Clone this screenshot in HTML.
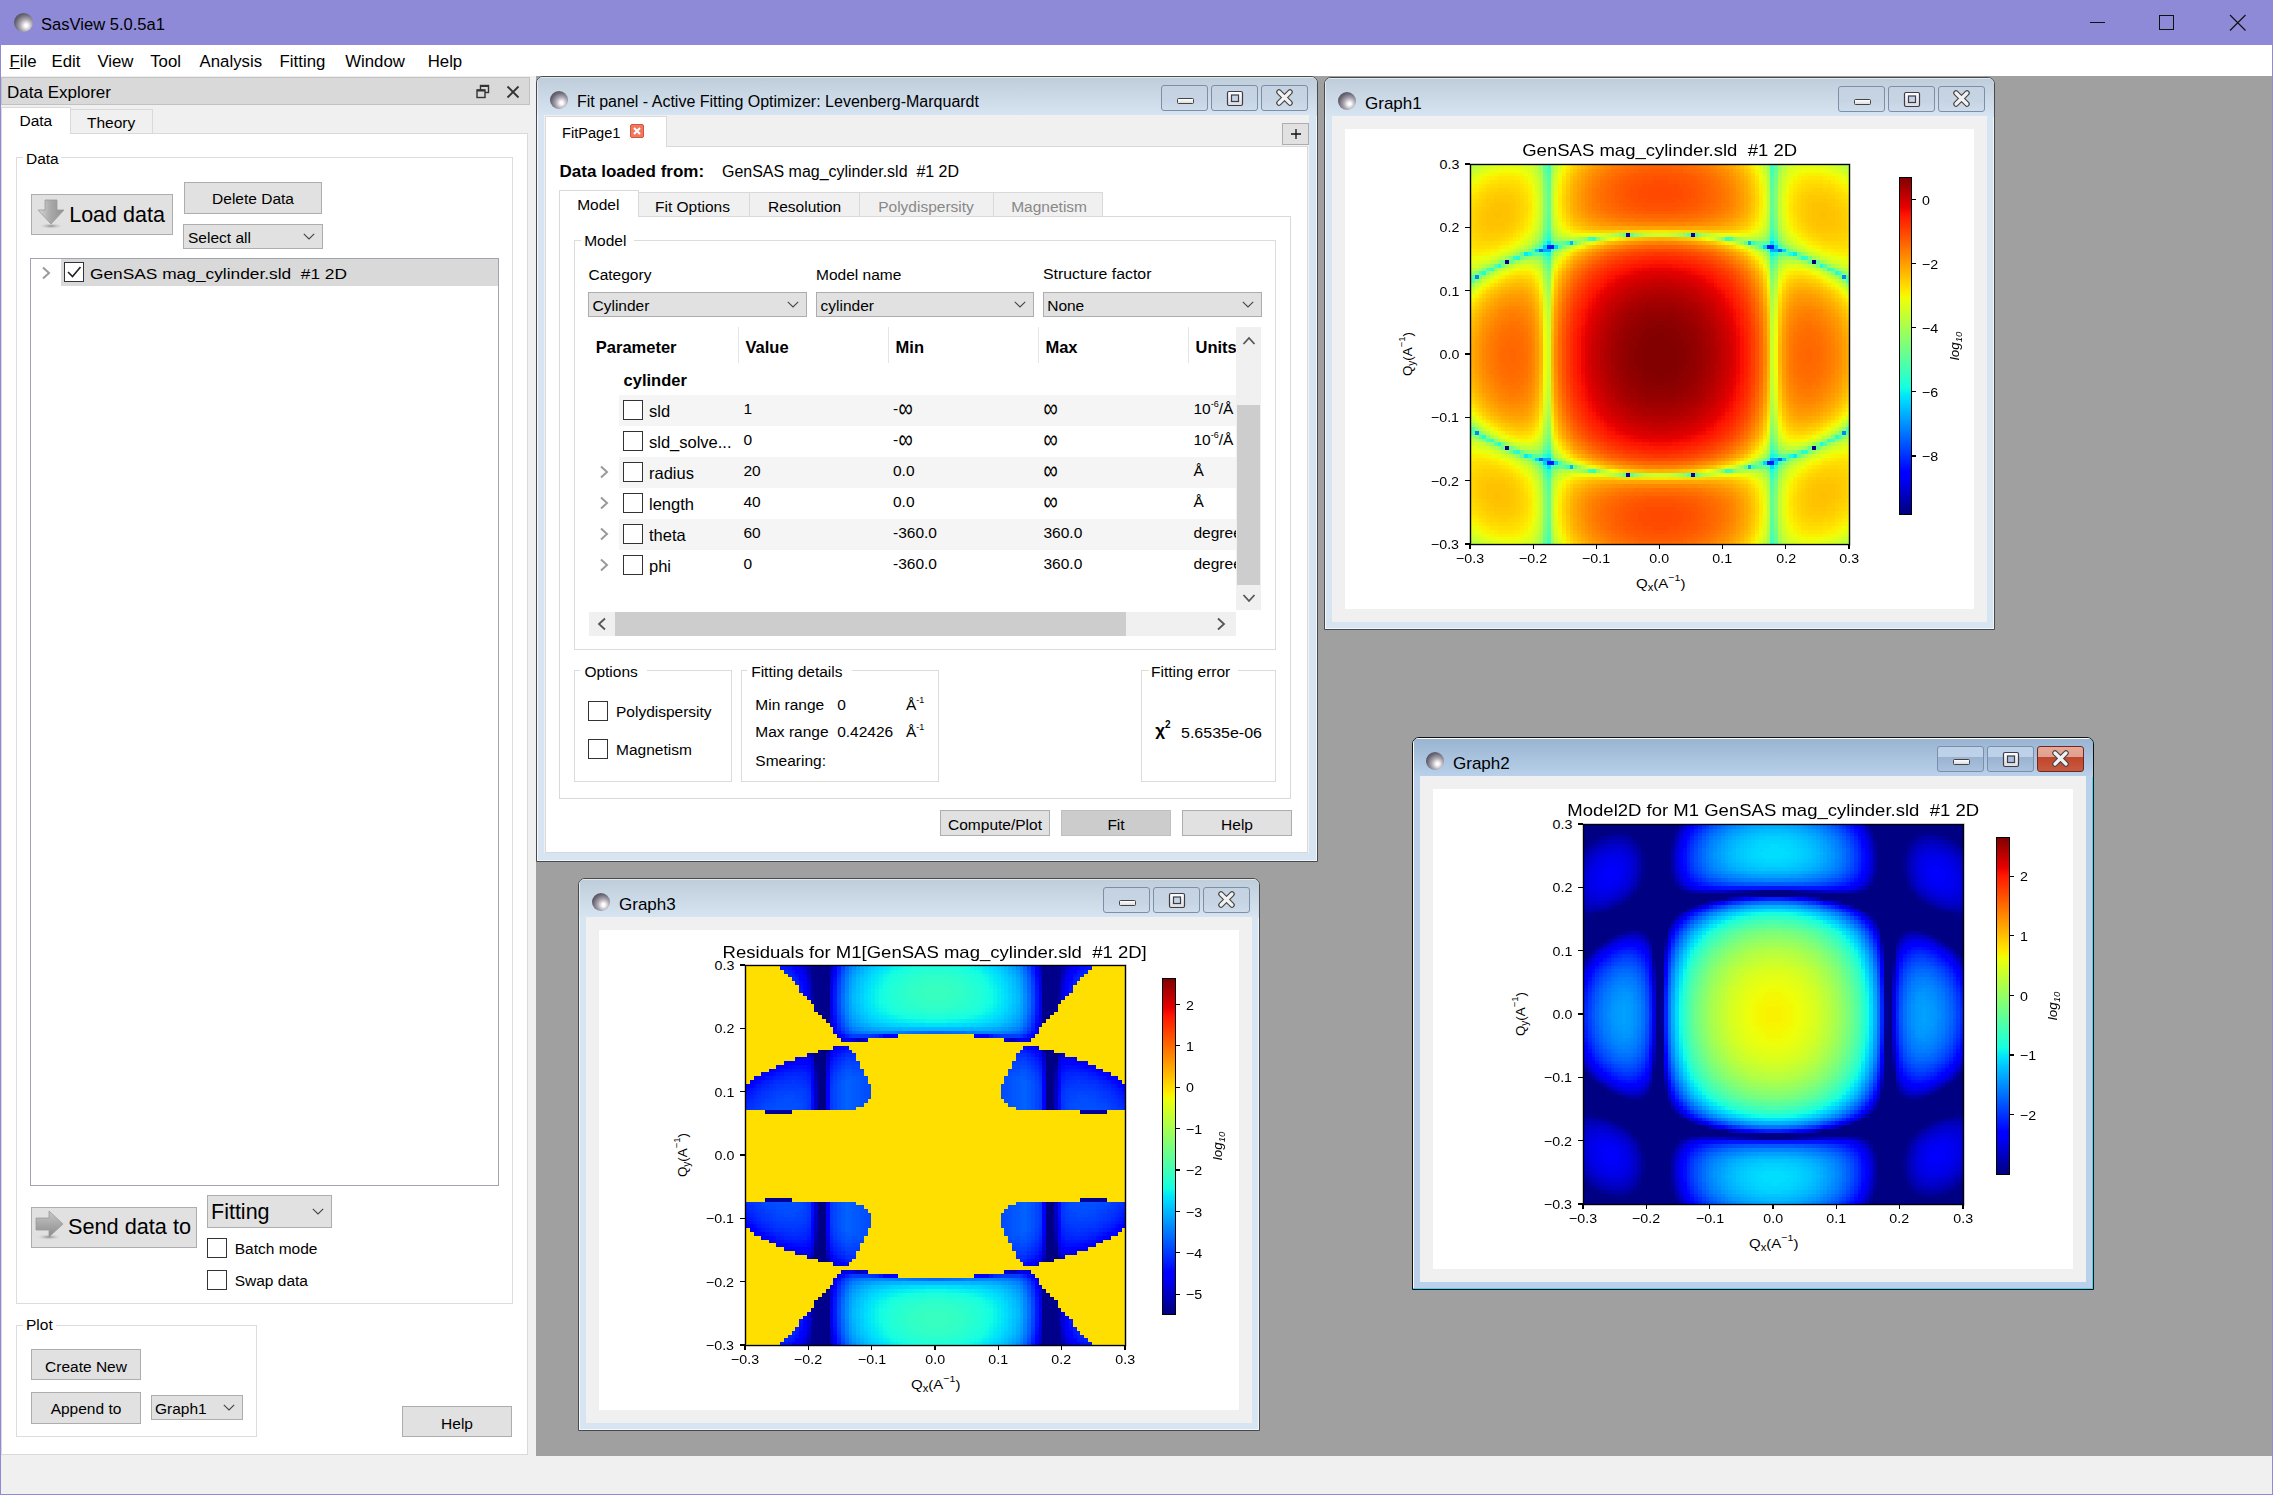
<!DOCTYPE html><html><head><meta charset="utf-8"><style>
*{margin:0;padding:0}
html,body{width:2273px;height:1495px;overflow:hidden;background:#F0F0F0;font-family:"Liberation Sans",sans-serif}
.t{position:absolute;width:0;display:flex;white-space:nowrap;line-height:1}
.t span{display:inline-block;line-height:1;white-space:nowrap}
.r{position:absolute}
canvas{position:absolute;image-rendering:pixelated}
</style></head><body>
<div class="r" style="left:0px;top:0px;width:2273px;height:45px;background:#8E8AD8;"></div>
<div class="r" style="left:14px;top:13px;width:19px;height:19px;border-radius:50%;background:radial-gradient(circle at 64% 66%, #fff 0%, #fdfbfc 9%, #aaa5b0 36%, #676472 64%, #3a3845 100%)"></div>
<div class="t" style="left:41.00px;top:15.84px;justify-content:flex-start;"><span style="font-size:17.2px;color:#000;transform:scaleX(0.9627505069511684);transform-origin:left top;">SasView 5.0.5a1</span></div>
<div class="r" style="left:2090px;top:22px;width:15px;height:1px;background:#111;"></div>
<div class="r" style="left:2159px;top:15px;width:15px;height:15px;background:transparent;box-sizing:border-box;border:1px solid #111;"></div>
<svg width="18" height="18" style="position:absolute;left:2229px;top:14px"><path d="M1 1 L16.5 16.5 M16.5 1 L1 16.5" stroke="#111" stroke-width="1.2"/></svg>
<div class="r" style="left:0px;top:45px;width:1px;height:1450px;background:#8E8AD8;"></div>
<div class="r" style="left:2272px;top:45px;width:1px;height:1450px;background:#8E8AD8;"></div>
<div class="r" style="left:0px;top:1494px;width:2273px;height:1px;background:#8E8AD8;"></div>
<div class="r" style="left:1px;top:45px;width:2271px;height:31px;background:#fff;"></div>
<div class="t" style="left:9.50px;top:54.18px;justify-content:flex-start;"><span style="font-size:16.8px;color:#000;"><u>F</u>ile</span></div>
<div class="t" style="left:51.60px;top:54.18px;justify-content:flex-start;"><span style="font-size:16.8px;color:#000;">Edit</span></div>
<div class="t" style="left:97.40px;top:54.18px;justify-content:flex-start;"><span style="font-size:16.8px;color:#000;">View</span></div>
<div class="t" style="left:150.20px;top:54.18px;justify-content:flex-start;"><span style="font-size:16.8px;color:#000;">Tool</span></div>
<div class="t" style="left:199.60px;top:54.18px;justify-content:flex-start;"><span style="font-size:16.8px;color:#000;">Analysis</span></div>
<div class="t" style="left:279.60px;top:54.18px;justify-content:flex-start;"><span style="font-size:16.8px;color:#000;">Fitting</span></div>
<div class="t" style="left:345.20px;top:54.18px;justify-content:flex-start;"><span style="font-size:16.8px;color:#000;">Window</span></div>
<div class="t" style="left:427.70px;top:54.18px;justify-content:flex-start;"><span style="font-size:16.8px;color:#000;">Help</span></div>
<div class="r" style="left:536px;top:76px;width:1736px;height:1380px;background:#A0A0A0;"></div>
<div class="r" style="left:1px;top:1456px;width:2271px;height:38px;background:#F0F0F0;"></div>
<div class="r" style="left:1px;top:77px;width:529px;height:28px;background:#D9D9D9;box-sizing:border-box;border:1px solid #C2C2C2;"></div>
<div class="t" style="left:7.00px;top:84.31px;justify-content:flex-start;"><span style="font-size:17px;color:#000;">Data Explorer</span></div>
<svg width="14" height="15" style="position:absolute;left:476px;top:84px"><rect x="4.5" y="1.5" width="8" height="7" fill="#D9D9D9" stroke="#333" stroke-width="1.4"/><rect x="4.5" y="1.2" width="8" height="1.8" fill="#333"/><rect x="1" y="6" width="8" height="7.5" fill="#D9D9D9" stroke="#333" stroke-width="1.4"/><rect x="1" y="5.5" width="8" height="2" fill="#333"/></svg>
<svg width="14" height="14" style="position:absolute;left:506px;top:85px"><path d="M1.5 1.5 L12.5 12.5 M12.5 1.5 L1.5 12.5" stroke="#333" stroke-width="1.8"/></svg>
<div class="r" style="left:1px;top:133px;width:527px;height:1322px;background:#fff;box-sizing:border-box;border:1px solid #D9D9D9;"></div>
<div class="r" style="left:70px;top:109px;width:83px;height:25px;background:#F0F0F0;box-sizing:border-box;border:1px solid #D9D9D9;"></div>
<div class="r" style="left:1px;top:107px;width:70px;height:27px;background:#fff;box-sizing:border-box;border:1px solid #D9D9D9;border-bottom:none"></div>
<div class="t" style="left:19.50px;top:113.28px;justify-content:flex-start;"><span style="font-size:15.5px;color:#000;">Data</span></div>
<div class="t" style="left:87.00px;top:114.68px;justify-content:flex-start;"><span style="font-size:15.5px;color:#000;">Theory</span></div>
<div class="r" style="left:16px;top:157px;width:497px;height:1147px;background:transparent;box-sizing:border-box;border:1px solid #DCDCDC;"></div>
<div class="r" style="left:22.5px;top:155px;width:38.8px;height:5px;background:#fff"></div>
<div class="t" style="left:26.00px;top:150.88px;justify-content:flex-start;"><span style="font-size:15.5px;color:#000;">Data</span></div>
<div class="r" style="left:31px;top:194px;width:142px;height:41px;background:#E1E1E1;box-sizing:border-box;border:1px solid #ADADAD;"></div>
<svg width="30" height="30" style="position:absolute;left:36px;top:199px"><defs><linearGradient id="ga" x1="0" x2="1"><stop offset="0" stop-color="#d8d8d8"/><stop offset="0.5" stop-color="#a8a8a8"/><stop offset="1" stop-color="#909090"/></linearGradient><radialGradient id="gs"><stop offset="0" stop-color="#888"/><stop offset="1" stop-color="#e1e1e1" stop-opacity="0"/></radialGradient></defs><ellipse cx="15" cy="27" rx="13" ry="3" fill="url(#gs)"/><path d="M9 1 H21 V11 H28 L15 25 L2 11 H9 Z" fill="url(#ga)" stroke="#9a9a9a" stroke-width="0.8"/></svg>
<div class="t" style="left:69.20px;top:204.60px;justify-content:flex-start;"><span style="font-size:21.5px;color:#000;">Load data</span></div>
<div class="r" style="left:184px;top:182px;width:138px;height:32px;background:#E1E1E1;box-sizing:border-box;border:1px solid #ADADAD;"></div>
<div class="t" style="left:253.00px;top:191.38px;justify-content:center;"><span style="font-size:15.5px;color:#000;">Delete Data</span></div>
<div class="r" style="left:183px;top:224px;width:140px;height:25px;background:#E1E1E1;box-sizing:border-box;border:1px solid #ADADAD;"></div>
<div class="t" style="left:188.00px;top:229.88px;justify-content:flex-start;"><span style="font-size:15.5px;color:#000;">Select all</span></div>
<svg width="12" height="7" viewBox="0 0 12 7" style="position:absolute;left:302.5px;top:233.0px"><path d="M0.8 0.8 L6 6 L11.2 0.8" fill="none" stroke="#444" stroke-width="1.1"/></svg>
<div class="r" style="left:30px;top:258px;width:469px;height:928px;background:#fff;box-sizing:border-box;border:1px solid #A0A4AC;"></div>
<div class="r" style="left:61px;top:259px;width:437px;height:27px;background:#D9D9D9;"></div>
<svg width="10" height="14" style="position:absolute;left:41px;top:266px"><path d="M2 1.5 L8 7 L2 12.5" fill="none" stroke="#9a9a9a" stroke-width="2"/></svg>
<div class="r" style="left:64px;top:262px;width:20px;height:20px;background:#fff;box-sizing:border-box;border:1px solid #333;"></div>
<svg width="20" height="20" style="position:absolute;left:64px;top:262px"><path d="M4 10 L8.5 14.5 L16.5 5" fill="none" stroke="#222" stroke-width="1.6"/></svg>
<div class="t" style="left:90.30px;top:265.88px;justify-content:flex-start;"><span style="font-size:15.5px;color:#000;transform:scaleX(1.117205579635099);transform-origin:left top;">GenSAS mag_cylinder.sld&nbsp;&nbsp;#1 2D</span></div>
<div class="r" style="left:31px;top:1207px;width:166px;height:41px;background:#E1E1E1;box-sizing:border-box;border:1px solid #ADADAD;"></div>
<svg width="30" height="30" style="position:absolute;left:35px;top:1210px"><defs><linearGradient id="gb" x1="0" y1="0" x2="0" y2="1"><stop offset="0" stop-color="#c8c8c8"/><stop offset="1" stop-color="#8a8a8a"/></linearGradient></defs><ellipse cx="14" cy="27" rx="13" ry="3" fill="url(#gs)"/><path d="M1 8 H14 V1 L28 14 L14 27 V20 H1 Z" fill="url(#gb)" stroke="#9a9a9a" stroke-width="0.8"/></svg>
<div class="t" style="left:68.20px;top:1216.80px;justify-content:flex-start;"><span style="font-size:21.5px;color:#000;transform:scaleX(1.0087730935949422);transform-origin:left top;">Send data to</span></div>
<div class="r" style="left:207px;top:1195px;width:125px;height:33px;background:#E1E1E1;box-sizing:border-box;border:1px solid #ADADAD;"></div>
<div class="t" style="left:211.00px;top:1201.80px;justify-content:flex-start;"><span style="font-size:21.5px;color:#000;">Fitting</span></div>
<svg width="12" height="7" viewBox="0 0 12 7" style="position:absolute;left:311.5px;top:1208.0px"><path d="M0.8 0.8 L6 6 L11.2 0.8" fill="none" stroke="#444" stroke-width="1.1"/></svg>
<div class="r" style="left:207px;top:1238px;width:20px;height:20px;background:#fff;box-sizing:border-box;border:1px solid #333;"></div>
<div class="t" style="left:234.70px;top:1241.38px;justify-content:flex-start;"><span style="font-size:15.5px;color:#000;">Batch mode</span></div>
<div class="r" style="left:207px;top:1270px;width:20px;height:20px;background:#fff;box-sizing:border-box;border:1px solid #333;"></div>
<div class="t" style="left:234.70px;top:1273.48px;justify-content:flex-start;"><span style="font-size:15.5px;color:#000;">Swap data</span></div>
<div class="r" style="left:16px;top:1325px;width:241px;height:112px;background:transparent;box-sizing:border-box;border:1px solid #DCDCDC;"></div>
<div class="r" style="left:22.5px;top:1323px;width:33.3px;height:5px;background:#fff"></div>
<div class="t" style="left:26.00px;top:1317.48px;justify-content:flex-start;"><span style="font-size:15.5px;color:#000;">Plot</span></div>
<div class="r" style="left:31px;top:1349px;width:110px;height:31px;background:#E1E1E1;box-sizing:border-box;border:1px solid #ADADAD;"></div>
<div class="t" style="left:86.00px;top:1358.88px;justify-content:center;"><span style="font-size:15.5px;color:#000;">Create New</span></div>
<div class="r" style="left:31px;top:1392px;width:110px;height:32px;background:#E1E1E1;box-sizing:border-box;border:1px solid #ADADAD;"></div>
<div class="t" style="left:86.00px;top:1401.08px;justify-content:center;"><span style="font-size:15.5px;color:#000;">Append to</span></div>
<div class="r" style="left:151px;top:1395px;width:92px;height:25px;background:#E1E1E1;box-sizing:border-box;border:1px solid #ADADAD;"></div>
<div class="t" style="left:155.00px;top:1400.58px;justify-content:flex-start;"><span style="font-size:15.5px;color:#000;">Graph1</span></div>
<svg width="12" height="7" viewBox="0 0 12 7" style="position:absolute;left:222.5px;top:1404.0px"><path d="M0.8 0.8 L6 6 L11.2 0.8" fill="none" stroke="#444" stroke-width="1.1"/></svg>
<div class="r" style="left:402px;top:1406px;width:110px;height:31px;background:#E1E1E1;box-sizing:border-box;border:1px solid #ADADAD;"></div>
<div class="t" style="left:457.00px;top:1416.08px;justify-content:center;"><span style="font-size:15.5px;color:#000;">Help</span></div>
<div class="r" style="left:536px;top:76px;width:782px;height:786px;box-sizing:border-box;border:1px solid #4a4a4a;border-radius:7px 7px 0 0;background:#D7E4F2;overflow:hidden;box-shadow:inset -1px -1px 0 #F2F7FE, inset 1px 1px 0 rgba(255,255,255,0.55)"><div style="position:absolute;left:0;top:0;right:0;height:39px;background:linear-gradient(#BFCDDB,#D7E4F2)"></div><div style="position:absolute;left:0;top:0;right:1px;height:1px;background:rgba(255,255,255,0.55)"></div><div style="position:absolute;left:0;top:0;width:1px;bottom:1px;background:rgba(255,255,255,0.55)"></div></div>
<div class="r" style="left:550px;top:91px;width:18px;height:18px;border-radius:50%;background:radial-gradient(circle at 64% 66%, #fff 0%, #fdfbfc 9%, #aaa5b0 36%, #676472 64%, #3a3845 100%)"></div>
<div class="t" style="left:577.00px;top:94.46px;justify-content:flex-start;"><span style="font-size:16px;color:#000;">Fit panel - Active Fitting Optimizer: Levenberg-Marquardt</span></div>
<div class="r" style="left:1161px;top:85px;width:47px;height:26px;box-sizing:border-box;border:1px solid #7C8EA8;border-radius:3px;background:linear-gradient(#C4D2E2 0%,#C6D4E4 60%,#CFDCEA 100%)"></div>
<div class="r" style="left:1176.5px;top:97.5px;width:17px;height:6px;box-sizing:border-box;border:1px solid #444;border-radius:1.5px;background:linear-gradient(#fff,#ddd)"></div>
<div class="r" style="left:1211px;top:85px;width:47px;height:26px;box-sizing:border-box;border:1px solid #7C8EA8;border-radius:3px;background:linear-gradient(#C4D2E2 0%,#C6D4E4 60%,#CFDCEA 100%)"></div>
<svg width="18" height="17" style="position:absolute;left:1226px;top:90px"><defs><linearGradient id="mx1211" x1="0" y1="0" x2="0" y2="1"><stop offset="0" stop-color="#fff"/><stop offset="1" stop-color="#dcdcdc"/></linearGradient></defs><rect x="1.5" y="1.5" width="15" height="14" rx="1.5" fill="url(#mx1211)" stroke="#3c3c4c" stroke-width="1.2"/><rect x="5.5" y="5" width="7" height="6.5" fill="#C5D3E3" stroke="#3c3c4c" stroke-width="1.2"/></svg>
<div class="r" style="left:1261px;top:85px;width:47px;height:26px;box-sizing:border-box;border:1px solid #7C8EA8;border-radius:3px;background:linear-gradient(#C4D2E2 0%,#C6D4E4 60%,#CFDCEA 100%)"></div>
<svg width="47" height="26" style="position:absolute;left:1261px;top:85px"><path d="M18 7 L29 18 M29 7 L18 18" stroke="#444" stroke-width="5.5" stroke-linecap="round"/><path d="M18 7 L29 18 M29 7 L18 18" stroke="#f2f2f2" stroke-width="3.2" stroke-linecap="round"/></svg>
<div class="r" style="left:544px;top:115px;width:765px;height:738px;background:#F0F0F0;"></div>
<div class="r" style="left:545px;top:146px;width:763px;height:707px;background:#fff;box-sizing:border-box;border:1px solid #D9D9D9;"></div>
<div class="r" style="left:545px;top:116px;width:122px;height:31px;background:#fff;box-sizing:border-box;border:1px solid #D9D9D9;border-bottom:none"></div>
<div class="t" style="left:562.20px;top:124.68px;justify-content:flex-start;"><span style="font-size:15.5px;color:#000;transform:scaleX(0.9429936849291687);transform-origin:left top;">FitPage1</span></div>
<svg width="15" height="15" style="position:absolute;left:630px;top:123.5px"><rect x="0.5" y="0.5" width="13" height="13" rx="1.5" fill="#F07860" stroke="#D05838"/><path d="M4 4 L10 10 M10 4 L4 10" stroke="#fff" stroke-width="2"/></svg>
<div class="r" style="left:1282px;top:123px;width:27px;height:22px;background:#E1E1E1;box-sizing:border-box;border:1px solid #ADADAD;"></div>
<svg width="12" height="12" style="position:absolute;left:1289.5px;top:128px"><path d="M6 1 V11 M1 6 H11" stroke="#111" stroke-width="1.3"/></svg>
<div class="t" style="left:559.60px;top:163.01px;justify-content:flex-start;"><span style="font-size:17px;color:#000;font-weight:bold;">Data loaded from:</span></div>
<div class="t" style="left:721.50px;top:163.86px;justify-content:flex-start;"><span style="font-size:16px;color:#000;transform:scaleX(0.9980677764565993);transform-origin:left top;">GenSAS mag_cylinder.sld&nbsp;&nbsp;#1 2D</span></div>
<div class="r" style="left:559px;top:216px;width:732px;height:583px;background:#fff;box-sizing:border-box;border:1px solid #D9D9D9;"></div>
<div class="r" style="left:638px;top:192px;width:112px;height:25px;background:#F0F0F0;box-sizing:border-box;border:1px solid #D9D9D9;"></div>
<div class="t" style="left:655.00px;top:198.58px;justify-content:flex-start;"><span style="font-size:15.5px;color:#000;">Fit Options</span></div>
<div class="r" style="left:749px;top:192px;width:111px;height:25px;background:#F0F0F0;box-sizing:border-box;border:1px solid #D9D9D9;"></div>
<div class="t" style="left:768.00px;top:198.58px;justify-content:flex-start;"><span style="font-size:15.5px;color:#000;">Resolution</span></div>
<div class="r" style="left:859px;top:192px;width:135px;height:25px;background:#F0F0F0;box-sizing:border-box;border:1px solid #D9D9D9;"></div>
<div class="t" style="left:878.20px;top:198.58px;justify-content:flex-start;"><span style="font-size:15.5px;color:#888;">Polydispersity</span></div>
<div class="r" style="left:993px;top:192px;width:110px;height:25px;background:#F0F0F0;box-sizing:border-box;border:1px solid #D9D9D9;"></div>
<div class="t" style="left:1011.20px;top:198.58px;justify-content:flex-start;"><span style="font-size:15.5px;color:#888;">Magnetism</span></div>
<div class="r" style="left:559px;top:190px;width:80px;height:27px;background:#fff;box-sizing:border-box;border:1px solid #D9D9D9;border-bottom:none"></div>
<div class="t" style="left:577.20px;top:196.88px;justify-content:flex-start;"><span style="font-size:15.5px;color:#000;">Model</span></div>
<div class="r" style="left:574px;top:240px;width:702px;height:410px;background:transparent;box-sizing:border-box;border:1px solid #DCDCDC;"></div>
<div class="r" style="left:581px;top:238px;width:53px;height:5px;background:#fff"></div>
<div class="t" style="left:584.20px;top:233.48px;justify-content:flex-start;"><span style="font-size:15.5px;color:#000;">Model</span></div>
<div class="t" style="left:588.50px;top:266.78px;justify-content:flex-start;"><span style="font-size:15.5px;color:#000;">Category</span></div>
<div class="t" style="left:816.00px;top:266.78px;justify-content:flex-start;"><span style="font-size:15.5px;color:#000;">Model name</span></div>
<div class="t" style="left:1043.20px;top:266.48px;justify-content:flex-start;"><span style="font-size:15.5px;color:#000;transform:scaleX(1.0231525179057244);transform-origin:left top;">Structure factor</span></div>
<div class="r" style="left:588px;top:292px;width:219px;height:25px;background:#E1E1E1;box-sizing:border-box;border:1px solid #ADADAD;"></div>
<div class="t" style="left:592.50px;top:297.68px;justify-content:flex-start;"><span style="font-size:15.5px;color:#000;">Cylinder</span></div>
<svg width="12" height="7" viewBox="0 0 12 7" style="position:absolute;left:786.5px;top:301.0px"><path d="M0.8 0.8 L6 6 L11.2 0.8" fill="none" stroke="#444" stroke-width="1.1"/></svg>
<div class="r" style="left:816px;top:292px;width:218px;height:25px;background:#E1E1E1;box-sizing:border-box;border:1px solid #ADADAD;"></div>
<div class="t" style="left:820.50px;top:297.68px;justify-content:flex-start;"><span style="font-size:15.5px;color:#000;">cylinder</span></div>
<svg width="12" height="7" viewBox="0 0 12 7" style="position:absolute;left:1013.5px;top:301.0px"><path d="M0.8 0.8 L6 6 L11.2 0.8" fill="none" stroke="#444" stroke-width="1.1"/></svg>
<div class="r" style="left:1043px;top:292px;width:219px;height:25px;background:#E1E1E1;box-sizing:border-box;border:1px solid #ADADAD;"></div>
<div class="t" style="left:1047.20px;top:297.68px;justify-content:flex-start;"><span style="font-size:15.5px;color:#000;">None</span></div>
<svg width="12" height="7" viewBox="0 0 12 7" style="position:absolute;left:1241.5px;top:301.0px"><path d="M0.8 0.8 L6 6 L11.2 0.8" fill="none" stroke="#444" stroke-width="1.1"/></svg>
<div class="r" style="left:738px;top:327px;width:1px;height:36px;background:#E5E5E5;"></div>
<div class="r" style="left:888px;top:327px;width:1px;height:36px;background:#E5E5E5;"></div>
<div class="r" style="left:1038px;top:327px;width:1px;height:36px;background:#E5E5E5;"></div>
<div class="r" style="left:1188px;top:327px;width:1px;height:36px;background:#E5E5E5;"></div>
<div class="t" style="left:595.80px;top:339.13px;justify-content:flex-start;"><span style="font-size:16.5px;color:#000;font-weight:bold;">Parameter</span></div>
<div class="t" style="left:745.50px;top:339.13px;justify-content:flex-start;"><span style="font-size:16.5px;color:#000;font-weight:bold;">Value</span></div>
<div class="t" style="left:895.60px;top:339.13px;justify-content:flex-start;"><span style="font-size:16.5px;color:#000;font-weight:bold;">Min</span></div>
<div class="t" style="left:1045.40px;top:339.13px;justify-content:flex-start;"><span style="font-size:16.5px;color:#000;font-weight:bold;">Max</span></div>
<div class="r" style="left:1188px;top:327px;width:48px;height:40px;overflow:hidden">
<div class="t" style="left:7.50px;top:12.13px;justify-content:flex-start;"><span style="font-size:16.5px;color:#000;font-weight:bold;">Units</span></div>
</div>
<div class="t" style="left:623.60px;top:372.23px;justify-content:flex-start;"><span style="font-size:16.5px;color:#000;font-weight:bold;">cylinder</span></div>
<div class="r" style="left:619px;top:395px;width:617px;height:31px;background:#F5F5F5;"></div>
<div class="r" style="left:623px;top:400px;width:20px;height:20px;background:#fff;box-sizing:border-box;border:1px solid #333;"></div>
<div class="t" style="left:649.00px;top:403.03px;justify-content:flex-start;"><span style="font-size:16.5px;color:#000;">sld</span></div>
<div class="t" style="left:743.50px;top:400.88px;justify-content:flex-start;"><span style="font-size:15.5px;color:#000;">1</span></div>
<div class="t" style="left:893.00px;top:400.88px;justify-content:flex-start;"><span style="font-size:15.5px;color:#000;">-</span></div>
<div class="t" style="left:898.50px;top:399.07px;justify-content:flex-start;transform:scaleY(1.32);transform-origin:0 14px"><span style="font-size:20px;color:#000;">∞</span></div>
<div class="t" style="left:1043.50px;top:399.07px;justify-content:flex-start;transform:scaleY(1.32);transform-origin:0 14px"><span style="font-size:20px;color:#000;">∞</span></div>
<div class="r" style="left:1188px;top:395px;width:48px;height:31px;overflow:hidden">
<div class="t" style="left:5.50px;top:5.88px;justify-content:flex-start;"><span style="font-size:15.5px;color:#000;">10<span style="font-size:9px;position:relative;top:-7.0px">-6</span>/Å</span></div>
</div>
<div class="r" style="left:623px;top:431px;width:20px;height:20px;background:#fff;box-sizing:border-box;border:1px solid #333;"></div>
<div class="t" style="left:649.00px;top:434.03px;justify-content:flex-start;"><span style="font-size:16.5px;color:#000;">sld_solve...</span></div>
<div class="t" style="left:743.50px;top:431.88px;justify-content:flex-start;"><span style="font-size:15.5px;color:#000;">0</span></div>
<div class="t" style="left:893.00px;top:431.88px;justify-content:flex-start;"><span style="font-size:15.5px;color:#000;">-</span></div>
<div class="t" style="left:898.50px;top:430.07px;justify-content:flex-start;transform:scaleY(1.32);transform-origin:0 14px"><span style="font-size:20px;color:#000;">∞</span></div>
<div class="t" style="left:1043.50px;top:430.07px;justify-content:flex-start;transform:scaleY(1.32);transform-origin:0 14px"><span style="font-size:20px;color:#000;">∞</span></div>
<div class="r" style="left:1188px;top:426px;width:48px;height:31px;overflow:hidden">
<div class="t" style="left:5.50px;top:5.88px;justify-content:flex-start;"><span style="font-size:15.5px;color:#000;">10<span style="font-size:9px;position:relative;top:-7.0px">-6</span>/Å</span></div>
</div>
<div class="r" style="left:619px;top:457px;width:617px;height:31px;background:#F5F5F5;"></div>
<svg width="10" height="14" style="position:absolute;left:599px;top:465px"><path d="M2 1.5 L8 7 L2 12.5" fill="none" stroke="#9a9a9a" stroke-width="2"/></svg>
<div class="r" style="left:623px;top:462px;width:20px;height:20px;background:#fff;box-sizing:border-box;border:1px solid #333;"></div>
<div class="t" style="left:649.00px;top:465.03px;justify-content:flex-start;"><span style="font-size:16.5px;color:#000;">radius</span></div>
<div class="t" style="left:743.50px;top:462.88px;justify-content:flex-start;"><span style="font-size:15.5px;color:#000;">20</span></div>
<div class="t" style="left:893.00px;top:462.88px;justify-content:flex-start;"><span style="font-size:15.5px;color:#000;">0.0</span></div>
<div class="t" style="left:1043.50px;top:461.07px;justify-content:flex-start;transform:scaleY(1.32);transform-origin:0 14px"><span style="font-size:20px;color:#000;">∞</span></div>
<div class="r" style="left:1188px;top:457px;width:48px;height:31px;overflow:hidden">
<div class="t" style="left:5.50px;top:5.88px;justify-content:flex-start;"><span style="font-size:15.5px;color:#000;">Å</span></div>
</div>
<svg width="10" height="14" style="position:absolute;left:599px;top:496px"><path d="M2 1.5 L8 7 L2 12.5" fill="none" stroke="#9a9a9a" stroke-width="2"/></svg>
<div class="r" style="left:623px;top:493px;width:20px;height:20px;background:#fff;box-sizing:border-box;border:1px solid #333;"></div>
<div class="t" style="left:649.00px;top:496.03px;justify-content:flex-start;"><span style="font-size:16.5px;color:#000;">length</span></div>
<div class="t" style="left:743.50px;top:493.88px;justify-content:flex-start;"><span style="font-size:15.5px;color:#000;">40</span></div>
<div class="t" style="left:893.00px;top:493.88px;justify-content:flex-start;"><span style="font-size:15.5px;color:#000;">0.0</span></div>
<div class="t" style="left:1043.50px;top:492.07px;justify-content:flex-start;transform:scaleY(1.32);transform-origin:0 14px"><span style="font-size:20px;color:#000;">∞</span></div>
<div class="r" style="left:1188px;top:488px;width:48px;height:31px;overflow:hidden">
<div class="t" style="left:5.50px;top:5.88px;justify-content:flex-start;"><span style="font-size:15.5px;color:#000;">Å</span></div>
</div>
<div class="r" style="left:619px;top:519px;width:617px;height:31px;background:#F5F5F5;"></div>
<svg width="10" height="14" style="position:absolute;left:599px;top:527px"><path d="M2 1.5 L8 7 L2 12.5" fill="none" stroke="#9a9a9a" stroke-width="2"/></svg>
<div class="r" style="left:623px;top:524px;width:20px;height:20px;background:#fff;box-sizing:border-box;border:1px solid #333;"></div>
<div class="t" style="left:649.00px;top:527.03px;justify-content:flex-start;"><span style="font-size:16.5px;color:#000;">theta</span></div>
<div class="t" style="left:743.50px;top:524.88px;justify-content:flex-start;"><span style="font-size:15.5px;color:#000;">60</span></div>
<div class="t" style="left:893.00px;top:524.88px;justify-content:flex-start;"><span style="font-size:15.5px;color:#000;">-360.0</span></div>
<div class="t" style="left:1043.50px;top:524.88px;justify-content:flex-start;"><span style="font-size:15.5px;color:#000;">360.0</span></div>
<div class="r" style="left:1188px;top:519px;width:48px;height:31px;overflow:hidden">
<div class="t" style="left:5.50px;top:5.88px;justify-content:flex-start;"><span style="font-size:15.5px;color:#000;">degrees</span></div>
</div>
<svg width="10" height="14" style="position:absolute;left:599px;top:558px"><path d="M2 1.5 L8 7 L2 12.5" fill="none" stroke="#9a9a9a" stroke-width="2"/></svg>
<div class="r" style="left:623px;top:555px;width:20px;height:20px;background:#fff;box-sizing:border-box;border:1px solid #333;"></div>
<div class="t" style="left:649.00px;top:558.03px;justify-content:flex-start;"><span style="font-size:16.5px;color:#000;">phi</span></div>
<div class="t" style="left:743.50px;top:555.88px;justify-content:flex-start;"><span style="font-size:15.5px;color:#000;">0</span></div>
<div class="t" style="left:893.00px;top:555.88px;justify-content:flex-start;"><span style="font-size:15.5px;color:#000;">-360.0</span></div>
<div class="t" style="left:1043.50px;top:555.88px;justify-content:flex-start;"><span style="font-size:15.5px;color:#000;">360.0</span></div>
<div class="r" style="left:1188px;top:550px;width:48px;height:31px;overflow:hidden">
<div class="t" style="left:5.50px;top:5.88px;justify-content:flex-start;"><span style="font-size:15.5px;color:#000;">degrees</span></div>
</div>
<div class="r" style="left:589px;top:612px;width:647px;height:24px;background:#F0F0F0;"></div>
<div class="r" style="left:615px;top:612px;width:511px;height:24px;background:#CDCDCD;"></div>
<svg width="12" height="14" style="position:absolute;left:596px;top:617px"><path d="M9 1.5 L3 7 L9 12.5" fill="none" stroke="#555" stroke-width="1.8"/></svg>
<svg width="12" height="14" style="position:absolute;left:1215px;top:617px"><path d="M3 1.5 L9 7 L3 12.5" fill="none" stroke="#555" stroke-width="1.8"/></svg>
<div class="r" style="left:1236px;top:327px;width:25px;height:283px;background:#F0F0F0;"></div>
<div class="r" style="left:1237px;top:405px;width:23px;height:180px;background:#CDCDCD;"></div>
<svg width="14" height="12" style="position:absolute;left:1241.5px;top:335px"><path d="M1.5 9 L7 3 L12.5 9" fill="none" stroke="#555" stroke-width="1.8"/></svg>
<svg width="14" height="12" style="position:absolute;left:1241.5px;top:592px"><path d="M1.5 3 L7 9 L12.5 3" fill="none" stroke="#555" stroke-width="1.8"/></svg>
<div class="r" style="left:574px;top:670px;width:158px;height:112px;background:transparent;box-sizing:border-box;border:1px solid #DCDCDC;"></div>
<div class="r" style="left:580px;top:668px;width:67px;height:5px;background:#fff"></div>
<div class="t" style="left:584.40px;top:663.88px;justify-content:flex-start;"><span style="font-size:15.5px;color:#000;">Options</span></div>
<div class="r" style="left:588px;top:701px;width:20px;height:20px;background:#fff;box-sizing:border-box;border:1px solid #333;"></div>
<div class="t" style="left:616.00px;top:704.48px;justify-content:flex-start;"><span style="font-size:15.5px;color:#000;">Polydispersity</span></div>
<div class="r" style="left:588px;top:739px;width:20px;height:20px;background:#fff;box-sizing:border-box;border:1px solid #333;"></div>
<div class="t" style="left:616.00px;top:742.38px;justify-content:flex-start;"><span style="font-size:15.5px;color:#000;">Magnetism</span></div>
<div class="r" style="left:741px;top:670px;width:198px;height:112px;background:transparent;box-sizing:border-box;border:1px solid #DCDCDC;"></div>
<div class="r" style="left:747px;top:668px;width:105px;height:5px;background:#fff"></div>
<div class="t" style="left:751.20px;top:663.88px;justify-content:flex-start;"><span style="font-size:15.5px;color:#000;">Fitting details</span></div>
<div class="t" style="left:755.30px;top:696.78px;justify-content:flex-start;"><span style="font-size:15.5px;color:#000;">Min range</span></div>
<div class="t" style="left:837.20px;top:696.78px;justify-content:flex-start;"><span style="font-size:15.5px;color:#000;">0</span></div>
<div class="t" style="left:906.00px;top:696.78px;justify-content:flex-start;"><span style="font-size:15.5px;color:#000;">Å<span style="font-size:9px;position:relative;top:-7.0px">-1</span></span></div>
<div class="t" style="left:755.30px;top:724.48px;justify-content:flex-start;"><span style="font-size:15.5px;color:#000;">Max range</span></div>
<div class="t" style="left:837.20px;top:724.48px;justify-content:flex-start;"><span style="font-size:15.5px;color:#000;">0.42426</span></div>
<div class="t" style="left:906.00px;top:724.48px;justify-content:flex-start;"><span style="font-size:15.5px;color:#000;">Å<span style="font-size:9px;position:relative;top:-7.0px">-1</span></span></div>
<div class="t" style="left:755.30px;top:752.58px;justify-content:flex-start;"><span style="font-size:15.5px;color:#000;">Smearing:</span></div>
<div class="r" style="left:1141px;top:670px;width:135px;height:112px;background:transparent;box-sizing:border-box;border:1px solid #DCDCDC;"></div>
<div class="r" style="left:1149px;top:668px;width:89px;height:5px;background:#fff"></div>
<div class="t" style="left:1151.00px;top:663.88px;justify-content:flex-start;"><span style="font-size:15.5px;color:#000;">Fitting error</span></div>
<div class="t" style="left:1155.30px;top:722.41px;justify-content:flex-start;"><span style="font-size:17px;color:#000;font-weight:bold;">χ<span style="font-size:10px;position:relative;top:-8.0px">2</span></span></div>
<div class="t" style="left:1180.80px;top:724.58px;justify-content:flex-start;"><span style="font-size:15.5px;color:#000;transform:scaleX(1.0327680734412854);transform-origin:left top;">5.6535e-06</span></div>
<div class="r" style="left:940px;top:810px;width:110px;height:26px;background:#E1E1E1;box-sizing:border-box;border:1px solid #ADADAD;"></div>
<div class="t" style="left:995.00px;top:816.88px;justify-content:center;"><span style="font-size:15.5px;color:#000;">Compute/Plot</span></div>
<div class="r" style="left:1061px;top:810px;width:110px;height:26px;background:#CCCCCC;box-sizing:border-box;border:1px solid #BFBFBF;"></div>
<div class="t" style="left:1116.00px;top:816.88px;justify-content:center;"><span style="font-size:15.5px;color:#000;">Fit</span></div>
<div class="r" style="left:1182px;top:810px;width:110px;height:26px;background:#E1E1E1;box-sizing:border-box;border:1px solid #ADADAD;"></div>
<div class="t" style="left:1237.00px;top:816.88px;justify-content:center;"><span style="font-size:15.5px;color:#000;">Help</span></div>
<div class="r" style="left:1324px;top:77px;width:671px;height:553px;box-sizing:border-box;border:1px solid #4a4a4a;border-radius:7px 7px 0 0;background:#D7E4F2;overflow:hidden;box-shadow:inset -1px -1px 0 #F2F7FE, inset 1px 1px 0 rgba(255,255,255,0.55)"><div style="position:absolute;left:0;top:0;right:0;height:39px;background:linear-gradient(#BFCDDB,#D7E4F2)"></div><div style="position:absolute;left:0;top:0;right:1px;height:1px;background:rgba(255,255,255,0.55)"></div><div style="position:absolute;left:0;top:0;width:1px;bottom:1px;background:rgba(255,255,255,0.55)"></div></div>
<div class="r" style="left:1338px;top:92px;width:18px;height:18px;border-radius:50%;background:radial-gradient(circle at 64% 66%, #fff 0%, #fdfbfc 9%, #aaa5b0 36%, #676472 64%, #3a3845 100%)"></div>
<div class="t" style="left:1365.00px;top:94.61px;justify-content:flex-start;"><span style="font-size:17px;color:#000;">Graph1</span></div>
<div class="r" style="left:1838px;top:86px;width:47px;height:26px;box-sizing:border-box;border:1px solid #7C8EA8;border-radius:3px;background:linear-gradient(#C4D2E2 0%,#C6D4E4 60%,#CFDCEA 100%)"></div>
<div class="r" style="left:1853.5px;top:98.5px;width:17px;height:6px;box-sizing:border-box;border:1px solid #444;border-radius:1.5px;background:linear-gradient(#fff,#ddd)"></div>
<div class="r" style="left:1888px;top:86px;width:47px;height:26px;box-sizing:border-box;border:1px solid #7C8EA8;border-radius:3px;background:linear-gradient(#C4D2E2 0%,#C6D4E4 60%,#CFDCEA 100%)"></div>
<svg width="18" height="17" style="position:absolute;left:1903px;top:91px"><defs><linearGradient id="mx1888" x1="0" y1="0" x2="0" y2="1"><stop offset="0" stop-color="#fff"/><stop offset="1" stop-color="#dcdcdc"/></linearGradient></defs><rect x="1.5" y="1.5" width="15" height="14" rx="1.5" fill="url(#mx1888)" stroke="#3c3c4c" stroke-width="1.2"/><rect x="5.5" y="5" width="7" height="6.5" fill="#C5D3E3" stroke="#3c3c4c" stroke-width="1.2"/></svg>
<div class="r" style="left:1938px;top:86px;width:47px;height:26px;box-sizing:border-box;border:1px solid #7C8EA8;border-radius:3px;background:linear-gradient(#C4D2E2 0%,#C6D4E4 60%,#CFDCEA 100%)"></div>
<svg width="47" height="26" style="position:absolute;left:1938px;top:86px"><path d="M18 7 L29 18 M29 7 L18 18" stroke="#444" stroke-width="5.5" stroke-linecap="round"/><path d="M18 7 L29 18 M29 7 L18 18" stroke="#f2f2f2" stroke-width="3.2" stroke-linecap="round"/></svg>
<div class="r" style="left:1332px;top:116px;width:655px;height:506px;background:#F0F0F0;"></div>
<div class="r" style="left:1345px;top:129px;width:629px;height:480px;background:#fff;"></div>
<canvas id="g1" width="100" height="100" style="left:1470.5px;top:164.5px;width:379px;height:380px"></canvas>
<div class="r" style="left:1470px;top:164px;width:380px;height:381px;box-sizing:border-box;border:1px solid #000;box-shadow:0 0 0 0.6px rgba(0,0,0,0.35), inset 0 0 0 0.6px rgba(0,0,0,0.35)"></div>
<div class="r" style="left:1465px;top:163.4px;width:5px;height:1.2px;background:#000;"></div>
<div class="t" style="left:1459.50px;top:158.13px;justify-content:flex-end;"><span style="font-size:13.2px;color:#000;transform:scaleX(1.08);transform-origin:right top;">0.3</span></div>
<div class="r" style="left:1469.4px;top:544px;width:1.2px;height:5px;background:#000;"></div>
<div class="t" style="left:1470.00px;top:552.33px;justify-content:center;"><span style="font-size:13.2px;color:#000;transform:scaleX(1.08);transform-origin:center top;">−0.3</span></div>
<div class="r" style="left:1465px;top:226.73333333333335px;width:5px;height:1.2px;background:#000;"></div>
<div class="t" style="left:1459.50px;top:221.46px;justify-content:flex-end;"><span style="font-size:13.2px;color:#000;transform:scaleX(1.08);transform-origin:right top;">0.2</span></div>
<div class="r" style="left:1532.5666666666668px;top:544px;width:1.2px;height:5px;background:#000;"></div>
<div class="t" style="left:1533.17px;top:552.33px;justify-content:center;"><span style="font-size:13.2px;color:#000;transform:scaleX(1.08);transform-origin:center top;">−0.2</span></div>
<div class="r" style="left:1465px;top:290.06666666666666px;width:5px;height:1.2px;background:#000;"></div>
<div class="t" style="left:1459.50px;top:284.79px;justify-content:flex-end;"><span style="font-size:13.2px;color:#000;transform:scaleX(1.08);transform-origin:right top;">0.1</span></div>
<div class="r" style="left:1595.7333333333333px;top:544px;width:1.2px;height:5px;background:#000;"></div>
<div class="t" style="left:1596.33px;top:552.33px;justify-content:center;"><span style="font-size:13.2px;color:#000;transform:scaleX(1.08);transform-origin:center top;">−0.1</span></div>
<div class="r" style="left:1465px;top:353.4px;width:5px;height:1.2px;background:#000;"></div>
<div class="t" style="left:1459.50px;top:348.13px;justify-content:flex-end;"><span style="font-size:13.2px;color:#000;transform:scaleX(1.08);transform-origin:right top;">0.0</span></div>
<div class="r" style="left:1658.9px;top:544px;width:1.2px;height:5px;background:#000;"></div>
<div class="t" style="left:1659.50px;top:552.33px;justify-content:center;"><span style="font-size:13.2px;color:#000;transform:scaleX(1.08);transform-origin:center top;">0.0</span></div>
<div class="r" style="left:1465px;top:416.73333333333335px;width:5px;height:1.2px;background:#000;"></div>
<div class="t" style="left:1459.50px;top:411.46px;justify-content:flex-end;"><span style="font-size:13.2px;color:#000;transform:scaleX(1.08);transform-origin:right top;">−0.1</span></div>
<div class="r" style="left:1722.0666666666668px;top:544px;width:1.2px;height:5px;background:#000;"></div>
<div class="t" style="left:1722.67px;top:552.33px;justify-content:center;"><span style="font-size:13.2px;color:#000;transform:scaleX(1.08);transform-origin:center top;">0.1</span></div>
<div class="r" style="left:1465px;top:480.06666666666666px;width:5px;height:1.2px;background:#000;"></div>
<div class="t" style="left:1459.50px;top:474.79px;justify-content:flex-end;"><span style="font-size:13.2px;color:#000;transform:scaleX(1.08);transform-origin:right top;">−0.2</span></div>
<div class="r" style="left:1785.2333333333333px;top:544px;width:1.2px;height:5px;background:#000;"></div>
<div class="t" style="left:1785.83px;top:552.33px;justify-content:center;"><span style="font-size:13.2px;color:#000;transform:scaleX(1.08);transform-origin:center top;">0.2</span></div>
<div class="r" style="left:1465px;top:543.4px;width:5px;height:1.2px;background:#000;"></div>
<div class="t" style="left:1459.50px;top:538.13px;justify-content:flex-end;"><span style="font-size:13.2px;color:#000;transform:scaleX(1.08);transform-origin:right top;">−0.3</span></div>
<div class="r" style="left:1848.4px;top:544px;width:1.2px;height:5px;background:#000;"></div>
<div class="t" style="left:1849.00px;top:552.33px;justify-content:center;"><span style="font-size:13.2px;color:#000;transform:scaleX(1.08);transform-origin:center top;">0.3</span></div>
<div class="t" style="left:1659.50px;top:142.22px;justify-content:center;"><span style="font-size:16.4px;color:#000;transform:scaleX(1.13);transform-origin:center top;">GenSAS mag_cylinder.sld&nbsp;&nbsp;#1 2D</span></div>
<div class="t" style="left:1635.50px;top:576.66px;justify-content:flex-start;"><span style="font-size:13.4px;color:#000;transform:scaleX(1.12);transform-origin:left top;">Q<span style="font-size:10px;position:relative;top:3.0px">x</span>(A<span style="font-size:9.5px;position:relative;top:-7.0px">−1</span>)</span></div>
<div class="r" style="left:1408px;top:354.0px;width:0;height:0"><div style="position:absolute;left:0;top:0;transform:translate(-50%,-50%) rotate(-90deg);white-space:nowrap;font-size:13.4px;line-height:1">Q<span style="font-size:10px;position:relative;top:3.0px">y</span>(A<span style="font-size:9.5px;position:relative;top:-7.0px">−1</span>)</div></div>
<canvas id="g1cb" width="1" height="256" style="left:1899px;top:177px;width:12px;height:337px;image-rendering:auto"></canvas>
<div class="r" style="left:1899px;top:177px;width:13px;height:338px;box-sizing:border-box;border:1px solid #000"></div>
<div class="r" style="left:1911px;top:198.8452901998097px;width:5px;height:1.2px;background:#000;"></div>
<div class="t" style="left:1921.50px;top:193.57px;justify-content:flex-start;"><span style="font-size:13.2px;color:#000;transform:scaleX(1.08);transform-origin:left top;">0</span></div>
<div class="r" style="left:1911px;top:262.97469077069456px;width:5px;height:1.2px;background:#000;"></div>
<div class="t" style="left:1921.50px;top:257.70px;justify-content:flex-start;"><span style="font-size:13.2px;color:#000;transform:scaleX(1.08);transform-origin:left top;">−2</span></div>
<div class="r" style="left:1911px;top:327.1040913415794px;width:5px;height:1.2px;background:#000;"></div>
<div class="t" style="left:1921.50px;top:321.83px;justify-content:flex-start;"><span style="font-size:13.2px;color:#000;transform:scaleX(1.08);transform-origin:left top;">−4</span></div>
<div class="r" style="left:1911px;top:391.2334919124643px;width:5px;height:1.2px;background:#000;"></div>
<div class="t" style="left:1921.50px;top:385.96px;justify-content:flex-start;"><span style="font-size:13.2px;color:#000;transform:scaleX(1.08);transform-origin:left top;">−6</span></div>
<div class="r" style="left:1911px;top:455.3628924833491px;width:5px;height:1.2px;background:#000;"></div>
<div class="t" style="left:1921.50px;top:450.09px;justify-content:flex-start;"><span style="font-size:13.2px;color:#000;transform:scaleX(1.08);transform-origin:left top;">−8</span></div>
<div class="r" style="left:1955px;top:345.5px;width:0;height:0"><div style="position:absolute;left:0;top:0;transform:translate(-50%,-50%) rotate(-90deg);white-space:nowrap;font-size:13.4px;line-height:1;font-style:italic">log<span style="font-size:9.5px;position:relative;top:3.0px">10</span></div></div>
<div class="r" style="left:578px;top:878px;width:682px;height:553px;box-sizing:border-box;border:1px solid #4a4a4a;border-radius:7px 7px 0 0;background:#D7E4F2;overflow:hidden;box-shadow:inset -1px -1px 0 #F2F7FE, inset 1px 1px 0 rgba(255,255,255,0.55)"><div style="position:absolute;left:0;top:0;right:0;height:39px;background:linear-gradient(#BFCDDB,#D7E4F2)"></div><div style="position:absolute;left:0;top:0;right:1px;height:1px;background:rgba(255,255,255,0.55)"></div><div style="position:absolute;left:0;top:0;width:1px;bottom:1px;background:rgba(255,255,255,0.55)"></div></div>
<div class="r" style="left:592px;top:893px;width:18px;height:18px;border-radius:50%;background:radial-gradient(circle at 64% 66%, #fff 0%, #fdfbfc 9%, #aaa5b0 36%, #676472 64%, #3a3845 100%)"></div>
<div class="t" style="left:619.00px;top:895.61px;justify-content:flex-start;"><span style="font-size:17px;color:#000;">Graph3</span></div>
<div class="r" style="left:1103px;top:887px;width:47px;height:26px;box-sizing:border-box;border:1px solid #7C8EA8;border-radius:3px;background:linear-gradient(#C4D2E2 0%,#C6D4E4 60%,#CFDCEA 100%)"></div>
<div class="r" style="left:1118.5px;top:899.5px;width:17px;height:6px;box-sizing:border-box;border:1px solid #444;border-radius:1.5px;background:linear-gradient(#fff,#ddd)"></div>
<div class="r" style="left:1153px;top:887px;width:47px;height:26px;box-sizing:border-box;border:1px solid #7C8EA8;border-radius:3px;background:linear-gradient(#C4D2E2 0%,#C6D4E4 60%,#CFDCEA 100%)"></div>
<svg width="18" height="17" style="position:absolute;left:1168px;top:892px"><defs><linearGradient id="mx1153" x1="0" y1="0" x2="0" y2="1"><stop offset="0" stop-color="#fff"/><stop offset="1" stop-color="#dcdcdc"/></linearGradient></defs><rect x="1.5" y="1.5" width="15" height="14" rx="1.5" fill="url(#mx1153)" stroke="#3c3c4c" stroke-width="1.2"/><rect x="5.5" y="5" width="7" height="6.5" fill="#C5D3E3" stroke="#3c3c4c" stroke-width="1.2"/></svg>
<div class="r" style="left:1203px;top:887px;width:47px;height:26px;box-sizing:border-box;border:1px solid #7C8EA8;border-radius:3px;background:linear-gradient(#C4D2E2 0%,#C6D4E4 60%,#CFDCEA 100%)"></div>
<svg width="47" height="26" style="position:absolute;left:1203px;top:887px"><path d="M18 7 L29 18 M29 7 L18 18" stroke="#444" stroke-width="5.5" stroke-linecap="round"/><path d="M18 7 L29 18 M29 7 L18 18" stroke="#f2f2f2" stroke-width="3.2" stroke-linecap="round"/></svg>
<div class="r" style="left:586px;top:917px;width:666px;height:506px;background:#F0F0F0;"></div>
<div class="r" style="left:599px;top:930px;width:640px;height:480px;background:#fff;"></div>
<canvas id="g3" width="100" height="100" style="left:745.5px;top:965.5px;width:380px;height:380px"></canvas>
<div class="r" style="left:745px;top:965px;width:381px;height:381px;box-sizing:border-box;border:1px solid #000;box-shadow:0 0 0 0.6px rgba(0,0,0,0.35), inset 0 0 0 0.6px rgba(0,0,0,0.35)"></div>
<div class="r" style="left:740px;top:964.4px;width:5px;height:1.2px;background:#000;"></div>
<div class="t" style="left:734.50px;top:959.13px;justify-content:flex-end;"><span style="font-size:13.2px;color:#000;transform:scaleX(1.08);transform-origin:right top;">0.3</span></div>
<div class="r" style="left:744.4px;top:1345px;width:1.2px;height:5px;background:#000;"></div>
<div class="t" style="left:745.00px;top:1353.33px;justify-content:center;"><span style="font-size:13.2px;color:#000;transform:scaleX(1.08);transform-origin:center top;">−0.3</span></div>
<div class="r" style="left:740px;top:1027.7333333333333px;width:5px;height:1.2px;background:#000;"></div>
<div class="t" style="left:734.50px;top:1022.46px;justify-content:flex-end;"><span style="font-size:13.2px;color:#000;transform:scaleX(1.08);transform-origin:right top;">0.2</span></div>
<div class="r" style="left:807.7333333333333px;top:1345px;width:1.2px;height:5px;background:#000;"></div>
<div class="t" style="left:808.33px;top:1353.33px;justify-content:center;"><span style="font-size:13.2px;color:#000;transform:scaleX(1.08);transform-origin:center top;">−0.2</span></div>
<div class="r" style="left:740px;top:1091.0666666666668px;width:5px;height:1.2px;background:#000;"></div>
<div class="t" style="left:734.50px;top:1085.79px;justify-content:flex-end;"><span style="font-size:13.2px;color:#000;transform:scaleX(1.08);transform-origin:right top;">0.1</span></div>
<div class="r" style="left:871.0666666666666px;top:1345px;width:1.2px;height:5px;background:#000;"></div>
<div class="t" style="left:871.67px;top:1353.33px;justify-content:center;"><span style="font-size:13.2px;color:#000;transform:scaleX(1.08);transform-origin:center top;">−0.1</span></div>
<div class="r" style="left:740px;top:1154.4px;width:5px;height:1.2px;background:#000;"></div>
<div class="t" style="left:734.50px;top:1149.13px;justify-content:flex-end;"><span style="font-size:13.2px;color:#000;transform:scaleX(1.08);transform-origin:right top;">0.0</span></div>
<div class="r" style="left:934.4px;top:1345px;width:1.2px;height:5px;background:#000;"></div>
<div class="t" style="left:935.00px;top:1353.33px;justify-content:center;"><span style="font-size:13.2px;color:#000;transform:scaleX(1.08);transform-origin:center top;">0.0</span></div>
<div class="r" style="left:740px;top:1217.7333333333333px;width:5px;height:1.2px;background:#000;"></div>
<div class="t" style="left:734.50px;top:1212.46px;justify-content:flex-end;"><span style="font-size:13.2px;color:#000;transform:scaleX(1.08);transform-origin:right top;">−0.1</span></div>
<div class="r" style="left:997.7333333333333px;top:1345px;width:1.2px;height:5px;background:#000;"></div>
<div class="t" style="left:998.33px;top:1353.33px;justify-content:center;"><span style="font-size:13.2px;color:#000;transform:scaleX(1.08);transform-origin:center top;">0.1</span></div>
<div class="r" style="left:740px;top:1281.0666666666668px;width:5px;height:1.2px;background:#000;"></div>
<div class="t" style="left:734.50px;top:1275.79px;justify-content:flex-end;"><span style="font-size:13.2px;color:#000;transform:scaleX(1.08);transform-origin:right top;">−0.2</span></div>
<div class="r" style="left:1061.0666666666668px;top:1345px;width:1.2px;height:5px;background:#000;"></div>
<div class="t" style="left:1061.67px;top:1353.33px;justify-content:center;"><span style="font-size:13.2px;color:#000;transform:scaleX(1.08);transform-origin:center top;">0.2</span></div>
<div class="r" style="left:740px;top:1344.4px;width:5px;height:1.2px;background:#000;"></div>
<div class="t" style="left:734.50px;top:1339.13px;justify-content:flex-end;"><span style="font-size:13.2px;color:#000;transform:scaleX(1.08);transform-origin:right top;">−0.3</span></div>
<div class="r" style="left:1124.4px;top:1345px;width:1.2px;height:5px;background:#000;"></div>
<div class="t" style="left:1125.00px;top:1353.33px;justify-content:center;"><span style="font-size:13.2px;color:#000;transform:scaleX(1.08);transform-origin:center top;">0.3</span></div>
<div class="t" style="left:935.00px;top:943.82px;justify-content:center;"><span style="font-size:16.4px;color:#000;transform:scaleX(1.13);transform-origin:center top;">Residuals for M1[GenSAS mag_cylinder.sld&nbsp;&nbsp;#1 2D]</span></div>
<div class="t" style="left:911.00px;top:1377.66px;justify-content:flex-start;"><span style="font-size:13.4px;color:#000;transform:scaleX(1.12);transform-origin:left top;">Q<span style="font-size:10px;position:relative;top:3.0px">x</span>(A<span style="font-size:9.5px;position:relative;top:-7.0px">−1</span>)</span></div>
<div class="r" style="left:683px;top:1155.0px;width:0;height:0"><div style="position:absolute;left:0;top:0;transform:translate(-50%,-50%) rotate(-90deg);white-space:nowrap;font-size:13.4px;line-height:1">Q<span style="font-size:10px;position:relative;top:3.0px">y</span>(A<span style="font-size:9.5px;position:relative;top:-7.0px">−1</span>)</div></div>
<canvas id="g3cb" width="1" height="256" style="left:1162px;top:978px;width:13.3px;height:336px;image-rendering:auto"></canvas>
<div class="r" style="left:1162px;top:978px;width:14.3px;height:337px;box-sizing:border-box;border:1px solid #000"></div>
<div class="r" style="left:1175.3px;top:1003.8827586206896px;width:5px;height:1.2px;background:#000;"></div>
<div class="t" style="left:1185.80px;top:998.61px;justify-content:flex-start;"><span style="font-size:13.2px;color:#000;transform:scaleX(1.08);transform-origin:left top;">2</span></div>
<div class="r" style="left:1175.3px;top:1045.2620689655173px;width:5px;height:1.2px;background:#000;"></div>
<div class="t" style="left:1185.80px;top:1039.99px;justify-content:flex-start;"><span style="font-size:13.2px;color:#000;transform:scaleX(1.08);transform-origin:left top;">1</span></div>
<div class="r" style="left:1175.3px;top:1086.641379310345px;width:5px;height:1.2px;background:#000;"></div>
<div class="t" style="left:1185.80px;top:1081.37px;justify-content:flex-start;"><span style="font-size:13.2px;color:#000;transform:scaleX(1.08);transform-origin:left top;">0</span></div>
<div class="r" style="left:1175.3px;top:1128.0206896551724px;width:5px;height:1.2px;background:#000;"></div>
<div class="t" style="left:1185.80px;top:1122.75px;justify-content:flex-start;"><span style="font-size:13.2px;color:#000;transform:scaleX(1.08);transform-origin:left top;">−1</span></div>
<div class="r" style="left:1175.3px;top:1169.4px;width:5px;height:1.2px;background:#000;"></div>
<div class="t" style="left:1185.80px;top:1164.13px;justify-content:flex-start;"><span style="font-size:13.2px;color:#000;transform:scaleX(1.08);transform-origin:left top;">−2</span></div>
<div class="r" style="left:1175.3px;top:1210.7793103448278px;width:5px;height:1.2px;background:#000;"></div>
<div class="t" style="left:1185.80px;top:1205.51px;justify-content:flex-start;"><span style="font-size:13.2px;color:#000;transform:scaleX(1.08);transform-origin:left top;">−3</span></div>
<div class="r" style="left:1175.3px;top:1252.1586206896552px;width:5px;height:1.2px;background:#000;"></div>
<div class="t" style="left:1185.80px;top:1246.88px;justify-content:flex-start;"><span style="font-size:13.2px;color:#000;transform:scaleX(1.08);transform-origin:left top;">−4</span></div>
<div class="r" style="left:1175.3px;top:1293.5379310344829px;width:5px;height:1.2px;background:#000;"></div>
<div class="t" style="left:1185.80px;top:1288.26px;justify-content:flex-start;"><span style="font-size:13.2px;color:#000;transform:scaleX(1.08);transform-origin:left top;">−5</span></div>
<div class="r" style="left:1218px;top:1146.0px;width:0;height:0"><div style="position:absolute;left:0;top:0;transform:translate(-50%,-50%) rotate(-90deg);white-space:nowrap;font-size:13.4px;line-height:1;font-style:italic">log<span style="font-size:9.5px;position:relative;top:3.0px">10</span></div></div>
<div class="r" style="left:1412px;top:737px;width:682px;height:553px;box-sizing:border-box;border:1px solid #111;border-radius:7px 7px 0 0;background:#B9D1EA;overflow:hidden;box-shadow:inset -1px -1px 0 #38D8F8, inset 1px 1px 0 #fff"><div style="position:absolute;left:0;top:0;right:0;height:39px;background:linear-gradient(#99B4D1,#B9D1EA)"></div><div style="position:absolute;left:0;top:0;right:1px;height:1px;background:#fff"></div><div style="position:absolute;left:0;top:0;width:1px;bottom:1px;background:#fff"></div></div>
<div class="r" style="left:1426px;top:752px;width:18px;height:18px;border-radius:50%;background:radial-gradient(circle at 64% 66%, #fff 0%, #fdfbfc 9%, #aaa5b0 36%, #676472 64%, #3a3845 100%)"></div>
<div class="t" style="left:1453.00px;top:754.61px;justify-content:flex-start;"><span style="font-size:17px;color:#000;">Graph2</span></div>
<div class="r" style="left:1937px;top:746px;width:47px;height:26px;box-sizing:border-box;border:1px solid #7C8EA8;border-radius:3px;background:linear-gradient(#BDD1E8 0%,#BDD1E8 42%,#9BB3D0 43%,#A9C2DE 100%)"></div>
<div class="r" style="left:1952.5px;top:758.5px;width:17px;height:6px;box-sizing:border-box;border:1px solid #444;border-radius:1.5px;background:linear-gradient(#fff,#ddd)"></div>
<div class="r" style="left:1987px;top:746px;width:47px;height:26px;box-sizing:border-box;border:1px solid #7C8EA8;border-radius:3px;background:linear-gradient(#BDD1E8 0%,#BDD1E8 42%,#9BB3D0 43%,#A9C2DE 100%)"></div>
<svg width="18" height="17" style="position:absolute;left:2002px;top:751px"><defs><linearGradient id="mx1987" x1="0" y1="0" x2="0" y2="1"><stop offset="0" stop-color="#fff"/><stop offset="1" stop-color="#dcdcdc"/></linearGradient></defs><rect x="1.5" y="1.5" width="15" height="14" rx="1.5" fill="url(#mx1987)" stroke="#3c3c4c" stroke-width="1.2"/><rect x="5.5" y="5" width="7" height="6.5" fill="#A9C0DC" stroke="#3c3c4c" stroke-width="1.2"/></svg>
<div class="r" style="left:2037px;top:746px;width:47px;height:26px;box-sizing:border-box;border:1px solid #6E2A20;border-radius:3px;background:linear-gradient(#E8A898 0%,#E0A090 42%,#C0462C 43%,#C85A40 100%)"></div>
<svg width="47" height="26" style="position:absolute;left:2037px;top:746px"><path d="M18 7 L29 18 M29 7 L18 18" stroke="#444" stroke-width="5.5" stroke-linecap="round"/><path d="M18 7 L29 18 M29 7 L18 18" stroke="#f2f2f2" stroke-width="3.2" stroke-linecap="round"/></svg>
<div class="r" style="left:1420px;top:776px;width:666px;height:506px;background:#F0F0F0;"></div>
<div class="r" style="left:1433px;top:789px;width:640px;height:480px;background:#fff;"></div>
<canvas id="g2" width="100" height="100" style="left:1583.5px;top:824.5px;width:380px;height:380px"></canvas>
<div class="r" style="left:1583px;top:824px;width:381px;height:381px;box-sizing:border-box;border:1px solid #000;box-shadow:0 0 0 0.6px rgba(0,0,0,0.35), inset 0 0 0 0.6px rgba(0,0,0,0.35)"></div>
<div class="r" style="left:1578px;top:823.4px;width:5px;height:1.2px;background:#000;"></div>
<div class="t" style="left:1572.50px;top:818.13px;justify-content:flex-end;"><span style="font-size:13.2px;color:#000;transform:scaleX(1.08);transform-origin:right top;">0.3</span></div>
<div class="r" style="left:1582.4px;top:1204px;width:1.2px;height:5px;background:#000;"></div>
<div class="t" style="left:1583.00px;top:1212.33px;justify-content:center;"><span style="font-size:13.2px;color:#000;transform:scaleX(1.08);transform-origin:center top;">−0.3</span></div>
<div class="r" style="left:1578px;top:886.7333333333333px;width:5px;height:1.2px;background:#000;"></div>
<div class="t" style="left:1572.50px;top:881.46px;justify-content:flex-end;"><span style="font-size:13.2px;color:#000;transform:scaleX(1.08);transform-origin:right top;">0.2</span></div>
<div class="r" style="left:1645.7333333333333px;top:1204px;width:1.2px;height:5px;background:#000;"></div>
<div class="t" style="left:1646.33px;top:1212.33px;justify-content:center;"><span style="font-size:13.2px;color:#000;transform:scaleX(1.08);transform-origin:center top;">−0.2</span></div>
<div class="r" style="left:1578px;top:950.0666666666666px;width:5px;height:1.2px;background:#000;"></div>
<div class="t" style="left:1572.50px;top:944.79px;justify-content:flex-end;"><span style="font-size:13.2px;color:#000;transform:scaleX(1.08);transform-origin:right top;">0.1</span></div>
<div class="r" style="left:1709.0666666666668px;top:1204px;width:1.2px;height:5px;background:#000;"></div>
<div class="t" style="left:1709.67px;top:1212.33px;justify-content:center;"><span style="font-size:13.2px;color:#000;transform:scaleX(1.08);transform-origin:center top;">−0.1</span></div>
<div class="r" style="left:1578px;top:1013.4px;width:5px;height:1.2px;background:#000;"></div>
<div class="t" style="left:1572.50px;top:1008.13px;justify-content:flex-end;"><span style="font-size:13.2px;color:#000;transform:scaleX(1.08);transform-origin:right top;">0.0</span></div>
<div class="r" style="left:1772.4px;top:1204px;width:1.2px;height:5px;background:#000;"></div>
<div class="t" style="left:1773.00px;top:1212.33px;justify-content:center;"><span style="font-size:13.2px;color:#000;transform:scaleX(1.08);transform-origin:center top;">0.0</span></div>
<div class="r" style="left:1578px;top:1076.7333333333333px;width:5px;height:1.2px;background:#000;"></div>
<div class="t" style="left:1572.50px;top:1071.46px;justify-content:flex-end;"><span style="font-size:13.2px;color:#000;transform:scaleX(1.08);transform-origin:right top;">−0.1</span></div>
<div class="r" style="left:1835.7333333333333px;top:1204px;width:1.2px;height:5px;background:#000;"></div>
<div class="t" style="left:1836.33px;top:1212.33px;justify-content:center;"><span style="font-size:13.2px;color:#000;transform:scaleX(1.08);transform-origin:center top;">0.1</span></div>
<div class="r" style="left:1578px;top:1140.0666666666668px;width:5px;height:1.2px;background:#000;"></div>
<div class="t" style="left:1572.50px;top:1134.79px;justify-content:flex-end;"><span style="font-size:13.2px;color:#000;transform:scaleX(1.08);transform-origin:right top;">−0.2</span></div>
<div class="r" style="left:1899.0666666666668px;top:1204px;width:1.2px;height:5px;background:#000;"></div>
<div class="t" style="left:1899.67px;top:1212.33px;justify-content:center;"><span style="font-size:13.2px;color:#000;transform:scaleX(1.08);transform-origin:center top;">0.2</span></div>
<div class="r" style="left:1578px;top:1203.4px;width:5px;height:1.2px;background:#000;"></div>
<div class="t" style="left:1572.50px;top:1198.13px;justify-content:flex-end;"><span style="font-size:13.2px;color:#000;transform:scaleX(1.08);transform-origin:right top;">−0.3</span></div>
<div class="r" style="left:1962.4px;top:1204px;width:1.2px;height:5px;background:#000;"></div>
<div class="t" style="left:1963.00px;top:1212.33px;justify-content:center;"><span style="font-size:13.2px;color:#000;transform:scaleX(1.08);transform-origin:center top;">0.3</span></div>
<div class="t" style="left:1773.00px;top:801.92px;justify-content:center;"><span style="font-size:16.4px;color:#000;transform:scaleX(1.13);transform-origin:center top;">Model2D for M1 GenSAS mag_cylinder.sld&nbsp;&nbsp;#1 2D</span></div>
<div class="t" style="left:1749.00px;top:1236.66px;justify-content:flex-start;"><span style="font-size:13.4px;color:#000;transform:scaleX(1.12);transform-origin:left top;">Q<span style="font-size:10px;position:relative;top:3.0px">x</span>(A<span style="font-size:9.5px;position:relative;top:-7.0px">−1</span>)</span></div>
<div class="r" style="left:1521px;top:1014.0px;width:0;height:0"><div style="position:absolute;left:0;top:0;transform:translate(-50%,-50%) rotate(-90deg);white-space:nowrap;font-size:13.4px;line-height:1">Q<span style="font-size:10px;position:relative;top:3.0px">y</span>(A<span style="font-size:9.5px;position:relative;top:-7.0px">−1</span>)</div></div>
<canvas id="g2cb" width="1" height="256" style="left:1996px;top:837px;width:13.3px;height:337px;image-rendering:auto"></canvas>
<div class="r" style="left:1996px;top:837px;width:14.3px;height:338px;box-sizing:border-box;border:1px solid #000"></div>
<div class="r" style="left:2009.3px;top:875.6968197879859px;width:5px;height:1.2px;background:#000;"></div>
<div class="t" style="left:2019.80px;top:870.42px;justify-content:flex-start;"><span style="font-size:13.2px;color:#000;transform:scaleX(1.08);transform-origin:left top;">2</span></div>
<div class="r" style="left:2009.3px;top:935.2374558303887px;width:5px;height:1.2px;background:#000;"></div>
<div class="t" style="left:2019.80px;top:929.96px;justify-content:flex-start;"><span style="font-size:13.2px;color:#000;transform:scaleX(1.08);transform-origin:left top;">1</span></div>
<div class="r" style="left:2009.3px;top:994.7780918727915px;width:5px;height:1.2px;background:#000;"></div>
<div class="t" style="left:2019.80px;top:989.50px;justify-content:flex-start;"><span style="font-size:13.2px;color:#000;transform:scaleX(1.08);transform-origin:left top;">0</span></div>
<div class="r" style="left:2009.3px;top:1054.3187279151944px;width:5px;height:1.2px;background:#000;"></div>
<div class="t" style="left:2019.80px;top:1049.04px;justify-content:flex-start;"><span style="font-size:13.2px;color:#000;transform:scaleX(1.08);transform-origin:left top;">−1</span></div>
<div class="r" style="left:2009.3px;top:1113.8593639575972px;width:5px;height:1.2px;background:#000;"></div>
<div class="t" style="left:2019.80px;top:1108.59px;justify-content:flex-start;"><span style="font-size:13.2px;color:#000;transform:scaleX(1.08);transform-origin:left top;">−2</span></div>
<div class="r" style="left:2053px;top:1005.5px;width:0;height:0"><div style="position:absolute;left:0;top:0;transform:translate(-50%,-50%) rotate(-90deg);white-space:nowrap;font-size:13.4px;line-height:1;font-style:italic">log<span style="font-size:9.5px;position:relative;top:3.0px">10</span></div></div>
<script>
function bessj1(x){var ax=Math.abs(x),z,xx,y,ans,ans1,ans2;
 if(ax<8.0){y=x*x;
  ans1=x*(72362614232.0+y*(-7895059235.0+y*(242396853.1+y*(-2972611.439+y*(15704.48260+y*(-30.16036606))))));
  ans2=144725228442.0+y*(2300535178.0+y*(18583304.74+y*(99447.43394+y*(376.9991397+y*1.0))));
  ans=ans1/ans2;}
 else{z=8.0/ax;y=z*z;xx=ax-2.356194491;
  ans1=1.0+y*(0.183105e-2+y*(-0.3516396496e-4+y*(0.2457520174e-5+y*(-0.240337019e-6))));
  ans2=0.04687499995+y*(-0.2002690873e-3+y*(0.8449199096e-5+y*(-0.88228987e-6+y*0.105787412e-6)));
  ans=Math.sqrt(0.636619772/ax)*(Math.cos(xx)*ans1-z*Math.sin(xx)*ans2*1.0);
  if(x<0.0)ans=-ans;}
 return ans;}
function jet(t){t=Math.max(0,Math.min(1,t));
 function seg(p){for(var i=1;i<p.length;i++){if(t<=p[i][0]){var a=p[i-1],b=p[i];return a[1]+(b[1]-a[1])*(t-a[0])/(b[0]-a[0]);}}return p[p.length-1][1];}
 var r=seg([[0,0],[0.35,0],[0.66,1],[0.89,1],[1,0.5]]);
 var g=seg([[0,0],[0.125,0],[0.375,1],[0.64,1],[0.91,0],[1,0]]);
 var b=seg([[0,0.5],[0.11,1],[0.34,1],[0.65,0],[1,0]]);
 return [Math.round(r*255),Math.round(g*255),Math.round(b*255)];}
function lut(v,vmin,vmax){var t=(v-vmin)/(vmax-vmin);var k=Math.floor(t*256);if(k>255)k=255;if(k<0)k=0;return jet((k+0.5)/256);}
var S=Math.sin(Math.PI/3),C=Math.cos(Math.PI/3);
function IR(qx,qy,R,H){var qpar=qx*S;var qperp=Math.sqrt(qy*qy+qx*qx*C*C);var a=qperp*R,b=qpar*H;
 var fa=a<1e-8?1:2*bessj1(a)/a;var fb=Math.abs(b)<1e-8?1:Math.sin(b)/b;return 1e-4*Math.PI*R*R*2*H*fa*fa*fb*fb;}
function I(qx,qy){return IR(qx,qy,20,20);}
function draw(id,fn,vmin,vmax){var c=document.getElementById(id);var x=c.getContext('2d');var im=x.createImageData(100,100);
 for(var j=0;j<100;j++){var qy=0.3-(j+0.5)*0.006;for(var i=0;i<100;i++){var qx=-0.3+(i+0.5)*0.006;var v=fn(qx,qy);var col=lut(v,vmin,vmax);var p=(j*100+i)*4;im.data[p]=col[0];im.data[p+1]=col[1];im.data[p+2]=col[2];im.data[p+3]=255;}}
 x.putImageData(im,0,0);
 var cb=document.getElementById(id+'cb');var y=cb.getContext('2d');var im2=y.createImageData(1,256);
 for(var k=0;k<256;k++){var col=jet((255-k+0.5)/256);var p=k*4;im2.data[p]=col[0];im2.data[p+1]=col[1];im2.data[p+2]=col[2];im2.data[p+3]=255;}
 y.putImageData(im2,0,0);}
function L(q){return Math.log(Math.max(I(q[0],q[1]),1e-30))/Math.LN10;}
draw('g1',function(qx,qy){var v=Math.log(Math.max(IR(qx,qy,20.09,20.25),1e-30))/Math.LN10;return v<-6.8?-6.8+(v+6.8)*2.5:v;},-9.81,0.70);
draw('g2',function(qx,qy){return Math.max(Math.log(Math.max(I(qx,qy),1e-30))/Math.LN10,-3);},-3.0,2.66);
function ring(qx,qy){return qy*qy+0.25*qx*qx>0.189*0.189;}
draw('g3',function(qx,qy){var ax=Math.abs(qx),ay=Math.abs(qy);var lv=Math.log(Math.max(I(qx,qy),1e-30))/Math.LN10;
 if(qy*qy+0.25*qx*qx>0.1912*0.1912&&ay>1.22*ax){var a2=Math.sqrt(qy*qy+0.25*qx*qx)*20,b2=qx*S*20;var fa2=2*bessj1(a2)/a2,fb2=Math.abs(b2)<1e-8?1:Math.sin(b2)/b2;var lr2=Math.log10(Math.max(fa2*fa2,1e-30)),ls2=Math.log10(Math.max(fb2*fb2,1e-30));return Math.max(-5.4,-2.1+0.8*(Math.max(lr2,-4.5)+1.765)+(ls2>=-1.0?ls2:-1.0+1.6*(ls2+1.0)));}
 if(!ring(qx,qy)&&(ay>=0.072||(ay>=0.066&&ax>0.226&&ax<0.27))){var d;if(ay>=0.1){d=0.036*(1-Math.pow(Math.min(1,(ay-0.1)/0.072),1.3));}else{d=0.036*(1-Math.pow((0.1-ay)/0.032,1.5));}
   if(ay<0.072)return -5.3; if(ax>0.136-d){var pr=qy*qy+0.25*qx*qx, a=Math.sqrt(pr)*20, bb=qx*S*20; var fa=2*bessj1(a)/a, fb=Math.sin(bb)/bb; var lr=Math.log10(Math.max(fa*fa,1e-30)), ls=Math.log10(Math.max(fb*fb,1e-30)); var v=-3.68-0.35*Math.abs(ls+1.1)+0.35*Math.min(0,Math.max(lr,-3.5)+1.0)+(ls<-2?0.9*(ls+2):0); return v;}}
 return 0;},-5.48,2.64);
</script>
</body></html>
